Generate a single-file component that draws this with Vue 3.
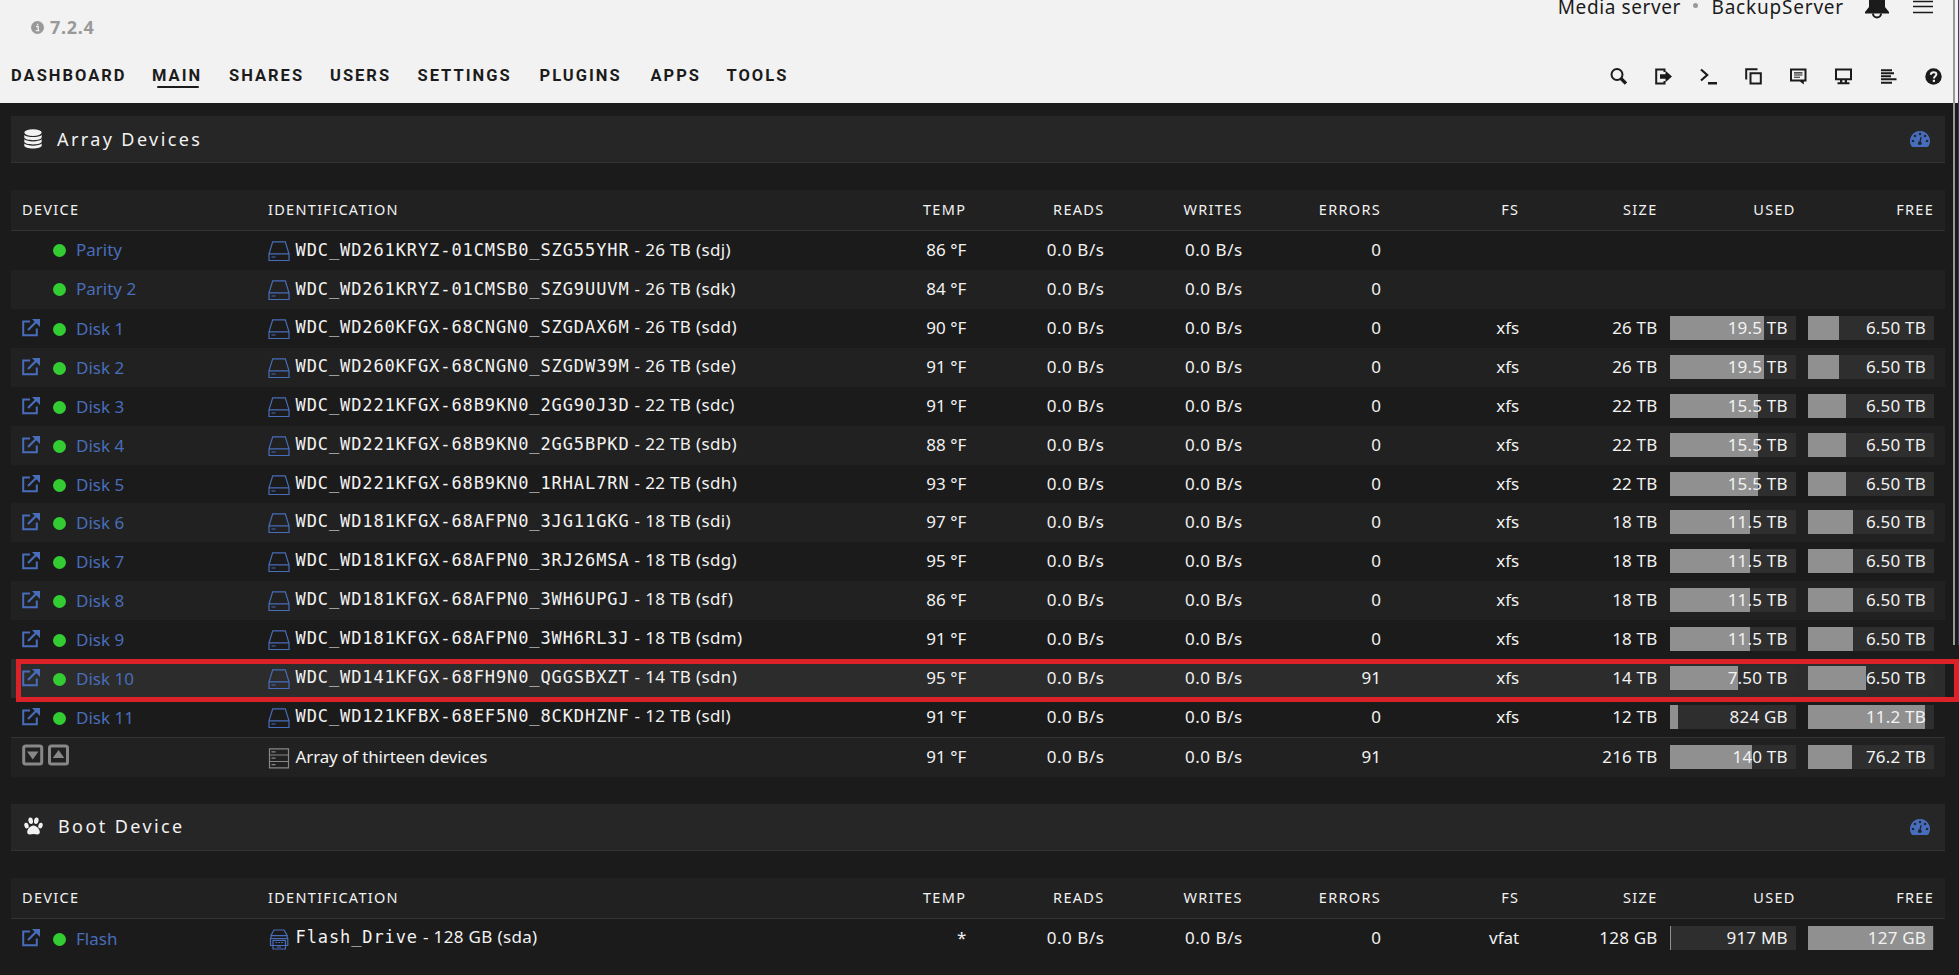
<script setup>
const nav = ['Dashboard', 'Main', 'Shares', 'Users', 'Settings', 'Plugins', 'Apps', 'Tools']
const columns = ['Temp', 'Reads', 'Writes', 'Errors', 'FS', 'Size', 'Used', 'Free']

const disk = (name, serial, cap, dev, temp, errors, used, usedPct, free, freePct) => ({
  name, id: serial, tail: `- ${cap} (${dev})`, temp: `${temp} °F`, errors, fs: used ? 'xfs' : '', size: used ? cap : '',
  used, usedPct, free, freePct, link: !!used, icon: 'hdd',
})

const devices = [
  disk('Parity', 'WDC_WD261KRYZ-01CMSB0_SZG55YHR', '26 TB', 'sdj', 86, 0),
  disk('Parity 2', 'WDC_WD261KRYZ-01CMSB0_SZG9UUVM', '26 TB', 'sdk', 84, 0),
  disk('Disk 1', 'WDC_WD260KFGX-68CNGN0_SZGDAX6M', '26 TB', 'sdd', 90, 0, '19.5 TB', 74.7, '6.50 TB', 24.6),
  disk('Disk 2', 'WDC_WD260KFGX-68CNGN0_SZGDW39M', '26 TB', 'sde', 91, 0, '19.5 TB', 74.7, '6.50 TB', 24.6),
  disk('Disk 3', 'WDC_WD221KFGX-68B9KN0_2GG90J3D', '22 TB', 'sdc', 91, 0, '15.5 TB', 70, '6.50 TB', 30.2),
  disk('Disk 4', 'WDC_WD221KFGX-68B9KN0_2GG5BPKD', '22 TB', 'sdb', 88, 0, '15.5 TB', 70, '6.50 TB', 30.2),
  disk('Disk 5', 'WDC_WD221KFGX-68B9KN0_1RHAL7RN', '22 TB', 'sdh', 93, 0, '15.5 TB', 70, '6.50 TB', 30.2),
  disk('Disk 6', 'WDC_WD181KFGX-68AFPN0_3JG11GKG', '18 TB', 'sdi', 97, 0, '11.5 TB', 63.5, '6.50 TB', 35.7),
  disk('Disk 7', 'WDC_WD181KFGX-68AFPN0_3RJ26MSA', '18 TB', 'sdg', 95, 0, '11.5 TB', 63.5, '6.50 TB', 35.7),
  disk('Disk 8', 'WDC_WD181KFGX-68AFPN0_3WH6UPGJ', '18 TB', 'sdf', 86, 0, '11.5 TB', 63.5, '6.50 TB', 35.7),
  disk('Disk 9', 'WDC_WD181KFGX-68AFPN0_3WH6RL3J', '18 TB', 'sdm', 91, 0, '11.5 TB', 63.5, '6.50 TB', 35.7),
  disk('Disk 10', 'WDC_WD141KFGX-68FH9N0_QGGSBXZT', '14 TB', 'sdn', 95, 91, '7.50 TB', 54, '6.50 TB', 46),
  disk('Disk 11', 'WDC_WD121KFBX-68EF5N0_8CKDHZNF', '12 TB', 'sdl', 91, 0, '824 GB', 6.4, '11.2 TB', 92.9),
  {
    total: true, label: 'Array of thirteen devices', temp: '91 °F', errors: 91, fs: '', size: '216 TB',
    used: '140 TB', usedPct: 65, free: '76.2 TB', freePct: 34.9, icon: 'array',
  },
]

const boot = [{
  name: 'Flash', id: 'Flash_Drive', tail: '- 128 GB (sda)', temp: '*', errors: 0, fs: 'vfat', size: '128 GB',
  used: '917 MB', usedPct: 0.8, free: '127 GB', freePct: 99.3, link: true, icon: 'flash',
}]

const sections = [
  { title: 'Array Devices', icon: 'db', rows: devices },
  { title: 'Boot Device', icon: 'paw', rows: boot },
]
</script>

<template>
  <div class="page">
    <header class="header">
      <div class="line">
        <div class="version">
          <svg width="13" height="13" viewBox="0 0 13 13"><circle cx="6.5" cy="6.5" r="6.5" fill="#999" /><path d="M5 5.500h2.200v4M4.800 9.600h3.600M6 3.300h1.300" stroke="#f2f2f2" stroke-width="1.300" fill="none" /></svg>
          <span>7.2.4</span>
        </div>
        <div class="server">
          <span class="media">Media server</span><i class="sep"></i><span>BackupServer</span>
          <svg class="bell" width="24" height="27" viewBox="0 0 24 27"><path d="M12 0c5 0 8 3.500 8 8.500V15l4 5v1.500H0V20l4-5V8.500C4 3.500 7 0 12 0z" fill="#1c1b1b" /><path d="M8 21.500a4 4 0 0 0 8 0" fill="none" stroke="#1c1b1b" stroke-width="2" /></svg>
          <svg class="burger" width="20" height="14" viewBox="0 0 20 14"><path d="M0 1.500h20M0 6.500h20M0 12.500h20" stroke="#1c1b1b" stroke-width="1.300" /></svg>
        </div>
      </div>
      <div class="line">
        <nav class="nav">
          <a v-for="n in nav" :key="n" :class="{ active: n === 'Main' }">{{ n }}</a>
        </nav>
        <div class="tools">
          <svg viewBox="0 0 17 17"><circle cx="7" cy="6.500" r="5.500" fill="none" stroke="#1c1b1b" stroke-width="2" /><path d="M11 10.500l5 5" stroke="#1c1b1b" stroke-width="3.300" /></svg>
          <svg viewBox="0 0 17 17"><path d="M9.500 4V1.500H1.200v14h8.300V13" fill="none" stroke="#1c1b1b" stroke-width="2" /><path d="M5 6.300h5.500V2.800L17 8.500l-6.500 5.700v-3.500H5z" fill="#1c1b1b" /></svg>
          <svg viewBox="0 0 17 17"><path d="M1 1.500l6.200 5.500L1 12.500" fill="none" stroke="#1c1b1b" stroke-width="2.200" /><path d="M8 14h9v2.500H8z" fill="#1c1b1b" /></svg>
          <svg viewBox="0 0 17 17"><path d="M1.200 11.500V1.200H12.500M5.500 5.300h10.300v10.300H5.500z" fill="none" stroke="#1c1b1b" stroke-width="2" /></svg>
          <svg viewBox="0 0 17 17"><path d="M0 .5h16.500v13H13.800v3L10 13.500H0z M2 2.500v9h12.500v-9z" fill="#1c1b1b" fill-rule="evenodd" /><path d="M4 4.900h8.500M4 7h8.500M4 9.200h6" stroke="#1c1b1b" stroke-width="1.100" /></svg>
          <svg viewBox="0 0 17 17"><path d="M1 1.500h15v9.700H1z" fill="none" stroke="#1c1b1b" stroke-width="2" /><path d="M5 11.500h2.300v2.700H5zM9.700 11.500H12v2.700H9.700zM2.500 14.200h12v2h-12z" fill="#1c1b1b" /></svg>
          <svg viewBox="0 0 17 17"><path d="M1 2.200h11M1 5.200h13M1 8.200h10M1 11.200h15.500M1 14.800h11" stroke="#1c1b1b" stroke-width="1.900" /></svg>
          <svg viewBox="0 0 17 17"><circle cx="8.500" cy="8.500" r="8.200" fill="#1c1b1b" /><path d="M5.800 6.700c0-3.400 5.600-3.300 5.600-.4 0 1.900-2.500 2-2.500 4.100" fill="none" stroke="#f2f2f2" stroke-width="2" /><path d="M7.800 11.800h2.200v2.100H7.800z" fill="#f2f2f2" /></svg>
        </div>
      </div>
    </header>

    <main class="content">
      <section v-for="s in sections" :key="s.title" class="section">
        <div class="title">
          <svg v-if="s.icon === 'db'" class="title-icon" width="18" height="20" viewBox="0 0 18 20"><ellipse cx="9" cy="3.600" rx="8.700" ry="3.400" fill="#f2f2f2" /><path d="M.3 6c3 2.800 14.400 2.800 17.400 0v2.300c0 3.800-17.400 3.800-17.400 0zM.3 10.300c3 2.800 14.400 2.800 17.400 0v2.300c0 3.800-17.400 3.800-17.400 0zM.3 14.600c3 2.800 14.400 2.800 17.400 0v2c0 4-17.400 4-17.400 0z" fill="#f2f2f2" /></svg>
          <svg v-else class="title-icon paw" width="19" height="18" viewBox="0 0 19 18"><g fill="#f2f2f2"><ellipse cx="6.700" cy="3.800" rx="2.300" ry="3.300" transform="rotate(-8 6.700 3.800)" /><ellipse cx="12.300" cy="3.800" rx="2.300" ry="3.300" transform="rotate(8 12.300 3.800)" /><ellipse cx="2.500" cy="8.600" rx="2.100" ry="2.900" transform="rotate(-18 2.500 8.600)" /><ellipse cx="16.500" cy="8.600" rx="2.100" ry="2.900" transform="rotate(18 16.500 8.600)" /><path d="M9.500 8.600c3.200 0 6.300 4 6.300 6.500 0 3.700-3.800 1.900-6.300 1.900s-6.300 1.800-6.300-1.900c0-2.500 3.100-6.500 6.300-6.500z" /></g></svg>
          <h2>{{ s.title }}</h2>
          <svg class="gauge" width="20" height="16" viewBox="0 0 20 16"><path d="M10 0a10 10 0 0 1 8.800 14.800q-.6 1.200-1.600 1.200H2.800q-1 0-1.600-1.200A10 10 0 0 1 10 0z" fill="#486dba" /><g fill="#22273a"><circle cx="10" cy="3" r="1.300" /><circle cx="5" cy="5" r="1.300" /><circle cx="15" cy="5" r="1.300" /><circle cx="3" cy="10" r="1.300" /><circle cx="17" cy="10" r="1.300" /><circle cx="9.800" cy="12.200" r="1.900" /></g><path d="M9.800 12l1.300-6" stroke="#22273a" stroke-width="1.300" /></svg>
        </div>

        <div class="table">
          <div class="row head">
            <div>Device</div>
            <div>Identification</div>
            <div v-for="c in columns" :key="c" class="num">{{ c }}</div>
          </div>
          <div
            v-for="(r, i) in s.rows" :key="i" class="row body"
            :class="{ even: i % 2 === 1, hover: r.name === 'Disk 10', total: r.total, linked: r.link }"
          >
            <div v-if="r.total" class="device">
              <svg class="sorts" width="48" height="22" viewBox="0 0 48 22"><g fill="none" stroke="#888" stroke-width="3"><rect x="1.700" y="2" width="18" height="18" rx="2" /><rect x="27.500" y="2" width="18" height="18" rx="2" /></g><path d="M5 7.500h11.500l-5.750 8zM30.800 14h11.500l-5.750-8z" fill="#888" /></svg>
            </div>
            <div v-else class="device">
              <span class="open">
                <svg v-if="r.link" width="18" height="18" viewBox="0 0 18 18"><path d="M8 2.500H1.200v13.700h13.600V9.500" fill="none" stroke="#486dba" stroke-width="2" /><path d="M6 11L14.500 2.500" stroke="#486dba" stroke-width="2.200" /><path d="M10 0h8v8l-2.400-2.400-3.200-3.200z" fill="#486dba" /></svg>
              </span>
              <i class="dot"></i>
              <a class="name">{{ r.name }}</a>
            </div>

            <div class="ident">
              <svg v-if="r.icon === 'hdd'" width="22" height="21" viewBox="0 0 22 21"><path d="M4.700 .8h12.600l3.700 12v6.700H1V12.800zM1 12.800h20M3.500 16h4" fill="none" stroke="#486dba" stroke-width="1.200" /></svg>
              <svg v-else-if="r.icon === 'array'" width="22" height="21" viewBox="0 0 22 21"><path d="M1.500.8h19v19h-19zM1.500 7h19M1.500 13.500h19M3.500 3.900h4M3.500 10.200h4M3.500 16.700h4" fill="none" stroke="#888" stroke-width="1.200" /></svg>
              <svg v-else width="22" height="21" viewBox="0 0 22 21"><path d="M3 9V6.500L6 1h10l3.200 5.500V9M3 6.700h16M2.500 9.500h17.300v7H17.500v3.500H5V16.500H2.500zM5 16.500v-5.200h12.500v5.200zM7.500 13.500h1.700M10.400 13.500h1.700M13.300 13.500H15M9 18h4" fill="none" stroke="#486dba" stroke-width="1.200" /></svg>
              <span v-if="r.total" class="label">{{ r.label }}</span>
              <template v-else><span class="mono">{{ r.id }}</span><span class="tail">{{ r.tail }}</span></template>
            </div>
            <div class="num">{{ r.temp }}</div>
            <div class="num rate">0.0 B/s</div>
            <div class="num rate">0.0 B/s</div>
            <div class="num">{{ r.errors }}</div>
            <div class="num">{{ r.fs }}</div>
            <div class="num size">{{ r.size }}</div>
            <div class="usage">
              <div v-if="r.used" class="bar"><i class="fill" :style="{ width: r.usedPct + '%' }"></i><span>{{ r.used }}</span></div>
            </div>
            <div class="usage">
              <div v-if="r.free" class="bar"><i class="fill" :style="{ width: r.freePct + '%' }"></i><span>{{ r.free }}</span></div>
            </div>
          </div>
        </div>
      </section>
    </main>
    <div class="callout"></div>
    <div class="scrollbar"></div>
    <div class="edge"></div>
  </div>
</template>

<style>
body { background: #1c1b1b; overflow: hidden; }
</style>

<style scoped>
.page {
  position: relative; width: 1959px; height: 975px; overflow: hidden; background: #1c1b1b; color: #f2f2f2;
  font-family: "Noto Sans", "Open Sans", sans-serif; font-size: 17px; box-sizing: border-box;
}
.page svg { display: block; flex: none; }
.header { display: grid; grid-template-rows: 52px 51px; height: 103px; background: #f2f2f2; color: #1c1b1b; }
.line { display: flex; justify-content: space-between; align-items: flex-start; }
.version { display: flex; align-items: center; gap: 6px; height: 26px; padding: 14px 0 0 31px; color: #999; font-size: 18px; font-weight: 700; letter-spacing: .7px; }
.server { display: flex; align-items: flex-start; height: 40px; margin-top: -8px; padding-right: 26px; font-size: 19px; line-height: 30px; letter-spacing: .8px; }
.media { letter-spacing: .6px; }
.sep { width: 5px; height: 5px; margin: 11px 13px 0 12.5px; border-radius: 50%; background: #999; }
.bell { margin: 0 24px 0 21px; }
.burger { margin-top: 8px; }
.nav { display: grid; grid-template-columns: 141px 77px 101px 87.5px 122px 111px 76px 90px; padding-left: 11px; font-family: Roboto, sans-serif; font-size: 16.5px; font-weight: 700; line-height: 48px; letter-spacing: 2px; text-transform: uppercase; }
.nav .active { position: relative; }
.nav .active::after { content: ""; position: absolute; left: 5px; top: 34px; width: 42px; height: 2px; background: #1c1b1b; border-radius: 1px; }
.tools { display: flex; gap: 28px; padding: 16px 17px 0 0; }
.tools svg { width: 17px; height: 17px; }

.content { padding: 13px 14px 0 11px; }
.section { margin-bottom: 27px; }
.title { display: flex; align-items: center; height: 46px; background: #262626; border-bottom: 1px solid #333; margin-bottom: 27px; padding: 0 15px 0 13px; }
.title h2 { flex: 1; margin: 0 0 0 15px; font-size: 18px; font-weight: 400; letter-spacing: 2.4px; line-height: 24px; }
.title .paw { margin-bottom: 2px; }
.title .paw + h2 { margin-bottom: 2px; }
.row { display: grid; grid-template-columns: 246px 560px repeat(8, 138.25px); padding: 0 11px; }
.head { height: 40px; line-height: 38px; background: #212121; border-bottom: 1px solid #333; font-size: 14.5px; letter-spacing: 1.3px; text-transform: uppercase; }
.body { height: 38.93px; line-height: 38px; }
.even { background: #212121; }
.hover { background: #2c2c2c; }
.total { height: 40px; line-height: 38px; border-top: 1px solid #333; background: #212121; box-sizing: border-box; }
.num { text-align: right; white-space: nowrap; }
.rate { letter-spacing: .55px; }
.size, .bar { letter-spacing: .2px; }
.device { display: flex; }
.open { width: 31px; padding-top: 10px; }
.dot { width: 13px; height: 13px; margin-top: 13px; border-radius: 50%; background: #3c3; }
.name { margin-left: 10px; color: #486dba; }
.linked .dot { margin-top: 14px; }
.linked .name { line-height: 40px; }
.sorts { margin-top: 6px; }
.ident { display: flex; white-space: nowrap; }
.ident svg { margin: 10px 5.5px 0 0; }
.linked .ident { line-height: 36px; }
.mono { font-family: "DejaVu Sans Mono", "Liberation Mono", monospace; font-size: 17px; letter-spacing: .9px; }
.tail { margin-left: 5px; letter-spacing: .35px; }
.label { letter-spacing: -.12px; }
.usage { padding: 7px 0 0 12.5px; }
.bar { position: relative; height: 24px; background: #2e2e2e; line-height: 23px; text-align: right; }
.bar span { position: relative; padding-right: 8px; }
.fill { position: absolute; left: 0; top: 0; height: 100%; background: #909090; }

.callout { position: absolute; left: 16px; top: 659px; width: 1943px; height: 43px; box-sizing: border-box; border: 5px solid #dc2229; }
.scrollbar { position: absolute; left: 1953px; top: 0; width: 2px; height: 645px; background: #999; }
.edge { position: absolute; left: 1958px; top: 0; width: 1px; height: 645px; background: #2c4170; }
</style>
